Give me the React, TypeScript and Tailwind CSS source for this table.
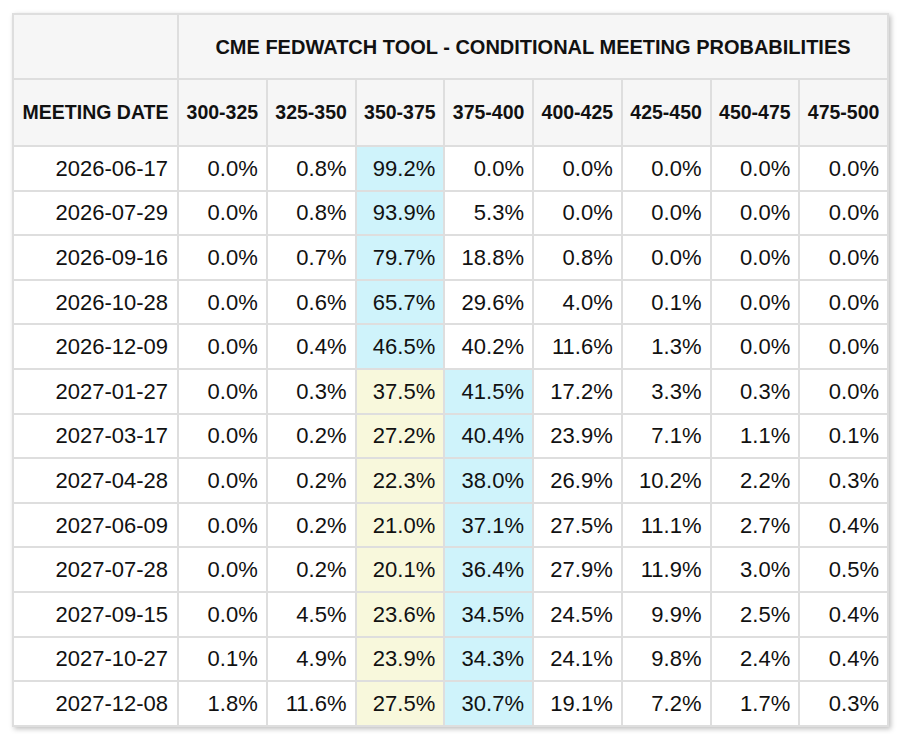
const ranges = [
  "300-325",
  "325-350",
  "350-375",
  "375-400",
  "400-425",
  "425-450",
  "450-475",
  "475-500",
];

// blue = most likely outcome, yellow = the current target range
type Row = { date: string; values: string[]; blue: number; yellow?: number };

const rows: Row[] = [
  { date: "2026-06-17", values: ["0.0%", "0.8%", "99.2%", "0.0%", "0.0%", "0.0%", "0.0%", "0.0%"], blue: 2 },
  { date: "2026-07-29", values: ["0.0%", "0.8%", "93.9%", "5.3%", "0.0%", "0.0%", "0.0%", "0.0%"], blue: 2 },
  { date: "2026-09-16", values: ["0.0%", "0.7%", "79.7%", "18.8%", "0.8%", "0.0%", "0.0%", "0.0%"], blue: 2 },
  { date: "2026-10-28", values: ["0.0%", "0.6%", "65.7%", "29.6%", "4.0%", "0.1%", "0.0%", "0.0%"], blue: 2 },
  { date: "2026-12-09", values: ["0.0%", "0.4%", "46.5%", "40.2%", "11.6%", "1.3%", "0.0%", "0.0%"], blue: 2 },
  { date: "2027-01-27", values: ["0.0%", "0.3%", "37.5%", "41.5%", "17.2%", "3.3%", "0.3%", "0.0%"], blue: 3, yellow: 2 },
  { date: "2027-03-17", values: ["0.0%", "0.2%", "27.2%", "40.4%", "23.9%", "7.1%", "1.1%", "0.1%"], blue: 3, yellow: 2 },
  { date: "2027-04-28", values: ["0.0%", "0.2%", "22.3%", "38.0%", "26.9%", "10.2%", "2.2%", "0.3%"], blue: 3, yellow: 2 },
  { date: "2027-06-09", values: ["0.0%", "0.2%", "21.0%", "37.1%", "27.5%", "11.1%", "2.7%", "0.4%"], blue: 3, yellow: 2 },
  { date: "2027-07-28", values: ["0.0%", "0.2%", "20.1%", "36.4%", "27.9%", "11.9%", "3.0%", "0.5%"], blue: 3, yellow: 2 },
  { date: "2027-09-15", values: ["0.0%", "4.5%", "23.6%", "34.5%", "24.5%", "9.9%", "2.5%", "0.4%"], blue: 3, yellow: 2 },
  { date: "2027-10-27", values: ["0.1%", "4.9%", "23.9%", "34.3%", "24.1%", "9.8%", "2.4%", "0.4%"], blue: 3, yellow: 2 },
  { date: "2027-12-08", values: ["1.8%", "11.6%", "27.5%", "30.7%", "19.1%", "7.2%", "1.7%", "0.3%"], blue: 3, yellow: 2 },
];

function cellBg(row: Row, i: number) {
  if (i === row.blue) return "bg-[#cff3fb]";
  if (i === row.yellow) return "bg-[#f8f8dc]";
  return "bg-white";
}

export default function App() {
  return (
    <div className="min-h-screen bg-white pl-3 pt-[13px] font-['Liberation_Sans',Arial,sans-serif] text-[#111]">
      <table className="w-[877px] table-fixed border-separate border-spacing-0 border-l-2 border-t-2 border-[#dedede] shadow-[2px_2px_5px_rgba(0,0,0,0.25)]">
        <colgroup>
          <col className="w-[165px]" />
          {ranges.map((r) => (
            <col key={r} />
          ))}
        </colgroup>
        <thead>
          <tr className="h-[65px]">
            <th className="border-b-2 border-r-2 border-[#dedede] bg-[#f6f6f6]" />
            <th
              colSpan={8}
              className="border-b-2 border-r-2 border-[#dedede] bg-[#f6f6f6] text-center text-[20px] font-bold"
            >
              CME FEDWATCH TOOL - CONDITIONAL MEETING PROBABILITIES
            </th>
          </tr>
          <tr className="h-[67px]">
            <th className="border-b-2 border-r-2 border-[#dedede] bg-[#f6f6f6] text-center text-[19.5px] font-bold">
              MEETING DATE
            </th>
            {ranges.map((r) => (
              <th
                key={r}
                className="border-b-2 border-r-2 border-[#dedede] bg-[#f6f6f6] text-center text-[19.5px] font-bold"
              >
                {r}
              </th>
            ))}
          </tr>
        </thead>
        <tbody>
          {rows.map((row) => (
            <tr key={row.date} className="h-[44.6px]">
              <td className="border-b-2 border-r-2 border-[#dedede] bg-white pr-[9px] text-right text-[22px]">
                {row.date}
              </td>
              {row.values.map((v, i) => (
                <td
                  key={i}
                  className={`border-b-2 border-r-2 border-[#dedede] pr-[8px] text-right text-[22px] ${cellBg(row, i)}`}
                >
                  {v}
                </td>
              ))}
            </tr>
          ))}
        </tbody>
      </table>
    </div>
  );
}
